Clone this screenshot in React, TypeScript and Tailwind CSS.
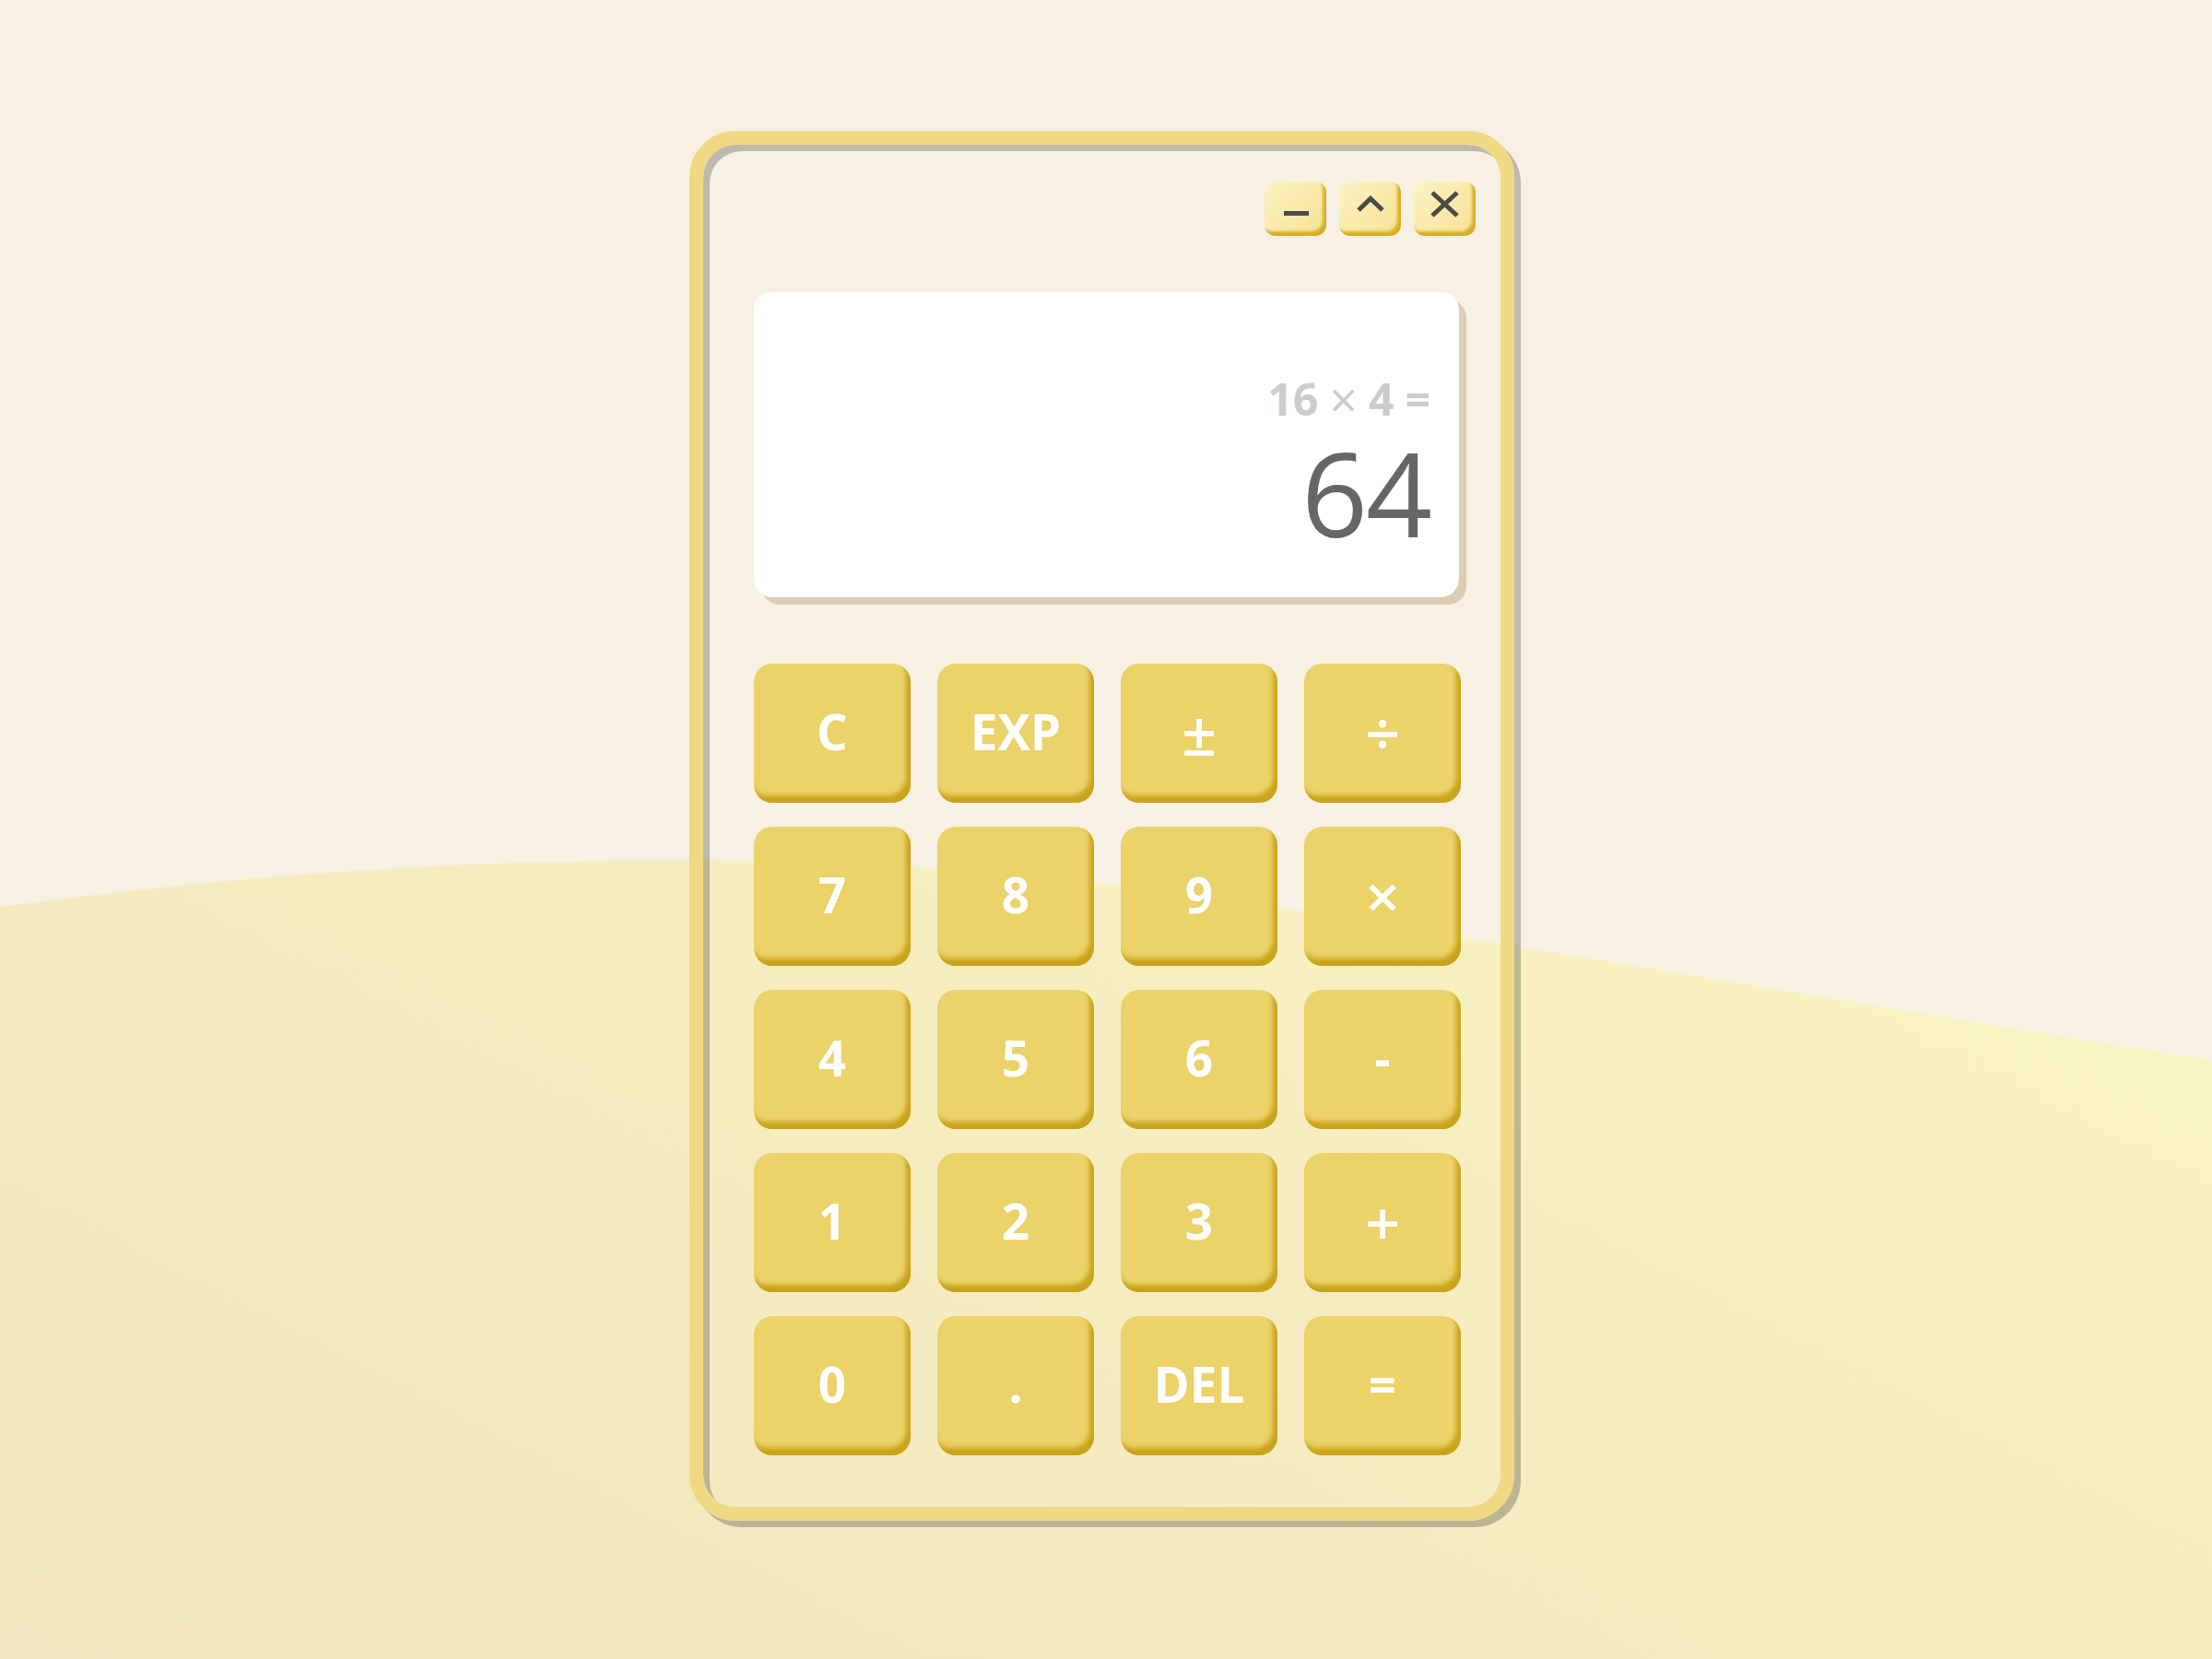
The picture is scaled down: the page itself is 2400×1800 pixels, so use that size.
import React from "react";

const keys: { label: string; light?: boolean }[] = [
  { label: "C" },
  { label: "EXP" },
  { label: "±", light: true },
  { label: "÷", light: true },
  { label: "7" },
  { label: "8" },
  { label: "9" },
  { label: "×", light: true },
  { label: "4" },
  { label: "5" },
  { label: "6" },
  { label: "-" },
  { label: "1" },
  { label: "2" },
  { label: "3" },
  { label: "+", light: true },
  { label: "0" },
  { label: "." },
  { label: "DEL" },
  { label: "=" },
];

function WinButton({ kind }: { kind: "min" | "max" | "close" }) {
  return (
    <div className="w-[67px] h-[59px] rounded-[12px] bg-[linear-gradient(135deg,#fdf2c4,#f6e193)] shadow-[inset_-4px_-5px_3px_#d8b027]">
      <svg width="67" height="59" viewBox="0 0 67 59">
        {kind === "min" && <rect x="21" y="32" width="27" height="5" fill="#4b4b4b" />}
        {kind === "max" && (
          <polyline points="21,31 34,18.5 47,31" fill="none" stroke="#4b4b4b" strokeWidth="5" />
        )}
        {kind === "close" && (
          <g stroke="#4b4b4b" strokeWidth="5">
            <line x1="20" y1="12" x2="47" y2="37" />
            <line x1="47" y1="12" x2="20" y2="37" />
          </g>
        )}
      </svg>
    </div>
  );
}

export default function App() {
  return (
    <div className="relative w-[2400px] h-[1800px] overflow-hidden bg-[#f7f1e4] font-['Open_Sans',sans-serif]">
      <svg className="absolute inset-0" width="2400" height="1800" viewBox="0 0 2400 1800">
        <defs>
          <linearGradient id="wave" x1="0" y1="1" x2="1" y2="0.3">
            <stop offset="0" stopColor="#f1e6bf" />
            <stop offset="0.55" stopColor="#f5ecc0" />
            <stop offset="1" stopColor="#f8f3c3" />
          </linearGradient>
        </defs>
        <path
          d="M0,984 Q360,935 714,933 Q1050,931 1380,983 L2400,1151 L2400,1800 L0,1800 Z"
          fill="url(#wave)"
        />
      </svg>

      <div className="relative pt-[142px] pl-[748px]">
        <div className="w-[895px] h-[1508px] border-[15px] border-[#efd983] rounded-[50px] shadow-[7px_7px_0_rgba(0,0,0,0.23),inset_7px_7px_0_rgba(0,0,0,0.23)] flex flex-col">
          <div className="flex justify-end gap-[14px] pt-[40px] pr-[27px]">
            <WinButton kind="min" />
            <WinButton kind="max" />
            <WinButton kind="close" />
          </div>

          <div className="mt-[61px] ml-[55px] w-[765px] h-[331px] bg-white rounded-[20px] shadow-[8px_8px_0_#ddcdb3] flex flex-col items-end pr-[31px]">
            <div className="mt-[84px] h-[64px] flex items-center gap-[12px] text-[48px] leading-none font-bold text-[#cccccc] whitespace-nowrap">
              <span>16</span>
              <span className="font-normal text-[54px] leading-none">×</span>
              <span>4</span>
              <span>=</span>
            </div>
            <div className="mt-[-6px] text-[126px] leading-[150px] text-[#666666] tracking-[-2px]">64</div>
          </div>

          <div className="mt-[72px] ml-[55px] grid grid-cols-[repeat(4,170px)] grid-rows-[repeat(5,151px)] gap-x-[29px] gap-y-[26px]">
            {keys.map((k, i) => (
              <div
                key={i}
                className="rounded-[20px] bg-[#ebd269] shadow-[inset_-5px_-8px_5px_#c9a31a] flex items-center justify-center pb-[4px]"
              >
                <span
                  className={
                    k.light
                      ? "text-white text-[66px] leading-none font-semibold"
                      : "text-white text-[53px] leading-none font-bold"
                  }
                >
                  {k.label}
                </span>
              </div>
            ))}
          </div>
        </div>
      </div>
    </div>
  );
}
